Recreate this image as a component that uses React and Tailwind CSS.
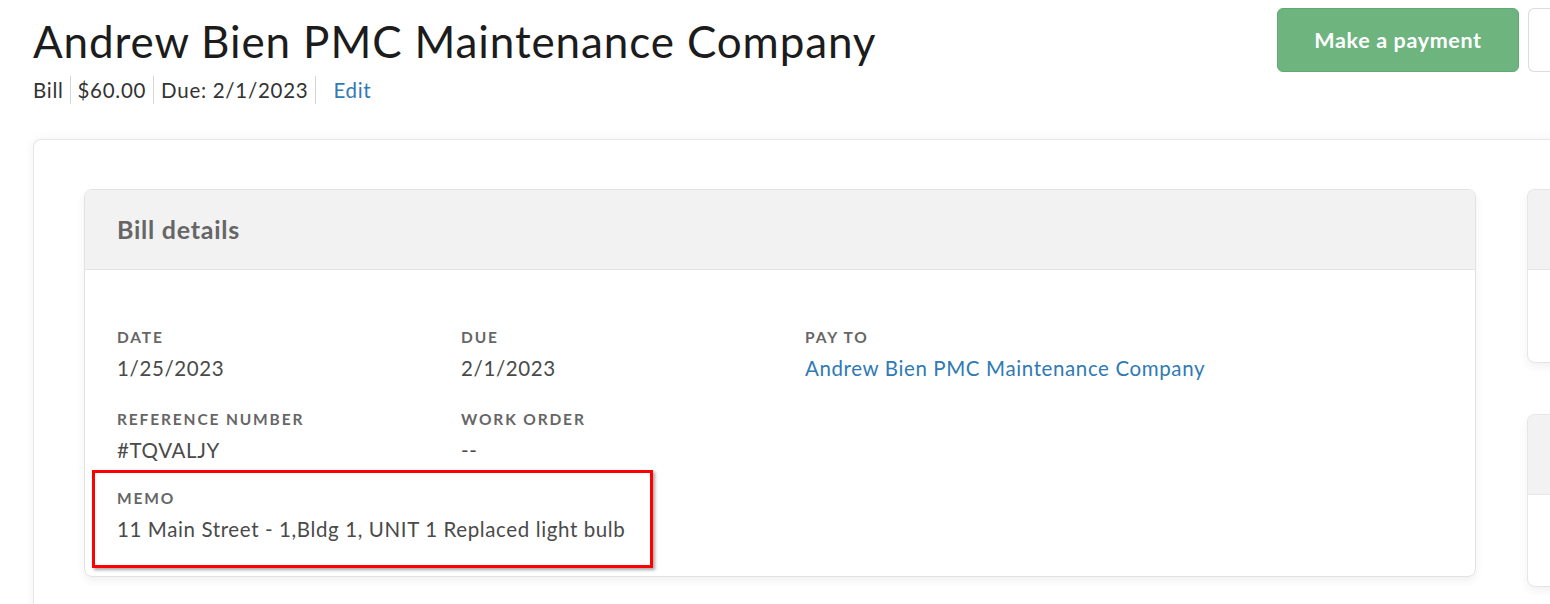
import React from 'react'

const FUENTE = { fontFamily: 'Lato, "Open Sans", Arial, sans-serif' }

function Campo({ etiqueta, valor, enlace }) {
  return (
    <div>
      <p className="text-[15.5px] font-bold uppercase leading-5 tracking-[0.12em] text-[#666]">{etiqueta}</p>
      <p className={`mt-2 text-[20.5px] leading-[26px] tracking-[0.03em] ${enlace ? 'text-[#2f7ab4]' : 'text-[#4a4a4a]'}`}>
        {valor}
      </p>
    </div>
  )
}

function TarjetaLateral({ alto }) {
  return (
    <div className={`w-[60px] overflow-hidden rounded-l-lg border border-r-0 border-[#e6e6e6] bg-white shadow-[0_4px_10px_rgba(0,0,0,0.06)] ${alto}`}>
      <div className="h-20 border-b border-[#e6e6e6] bg-[#f2f2f2]" />
    </div>
  )
}

export default function App() {
  return (
    <div className="h-[604px] w-[1550px] overflow-hidden bg-white" style={FUENTE}>
      <div className="flex items-start justify-between pl-[33px]">
        <div className="pt-[14px]">
          <h1 className="text-[44px] leading-[54px] tracking-[0.02em] text-[#1c1c1c]">
            Andrew Bien PMC Maintenance Company
          </h1>
          <div className="mt-[8px] flex items-center text-[20.5px] leading-[28px] tracking-[0.035em] text-[#333]">
            <span className="pr-[6px]">Bill</span>
            <span className="border-l border-[#d5d5d5] px-[7px]">$60.00</span>
            <span className="border-l border-[#d5d5d5] pl-[7px] pr-[7px]">Due: 2/1/2023</span>
            <span className="border-l border-[#d5d5d5] pl-[17px] text-[#2f7ab4]">Edit</span>
          </div>
        </div>
        <div className="flex gap-[9px] pt-[8px]">
          <button className="h-16 w-[242px] rounded-md border border-[#62a873] bg-[#6db47e] text-[21.5px] font-bold tracking-[0.03em] text-white">
            Make a payment
          </button>
          <button className="h-16 w-[22px] rounded-l-md border border-r-0 border-[#dcdcdc] bg-white" />
        </div>
      </div>

      <div className="mt-[35px] ml-[33px] w-[1560px] rounded-l-lg border border-r-0 border-[#e6e6e6] bg-white pb-[60px] pl-[50px] pt-[49px] shadow-[0_0_12px_rgba(0,0,0,0.05)]">
        <div className="flex items-start gap-[51px]">
          <div className="w-[1392px] overflow-hidden rounded-lg border border-[#e3e3e3] bg-white shadow-[0_4px_10px_rgba(0,0,0,0.06)]">
            <div className="flex h-20 items-center border-b border-[#e3e3e3] bg-[#f2f2f2] px-[32px]">
              <h2 className="text-[25px] font-bold tracking-[0.03em] text-[#666]">Bill details</h2>
            </div>
            <div className="px-[32px] pb-[34px] pt-[57px]">
              <div className="grid grid-cols-[344px_344px_1fr] gap-y-[28px]">
                <Campo etiqueta="Date" valor="1/25/2023" />
                <Campo etiqueta="Due" valor="2/1/2023" />
                <Campo etiqueta="Pay to" valor="Andrew Bien PMC Maintenance Company" enlace />
                <Campo etiqueta="Reference number" valor="#TQVALJY" />
                <Campo etiqueta="Work order" valor="--" />
                <div />
              </div>
              <div className="relative mt-[25px]">
                <Campo etiqueta="Memo" valor="11 Main Street - 1,Bldg 1, UNIT 1 Replaced light bulb" />
                <div className="absolute left-[-25px] top-[-18px] h-[98px] w-[561px] border-[3px] border-[#ff0000] shadow-[2px_2px_3px_rgba(0,0,0,0.35)]" />
              </div>
            </div>
          </div>
          <div className="flex flex-col gap-[51px]">
            <TarjetaLateral alto="h-[174px]" />
            <TarjetaLateral alto="h-[173px]" />
          </div>
        </div>
      </div>
    </div>
  )
}
